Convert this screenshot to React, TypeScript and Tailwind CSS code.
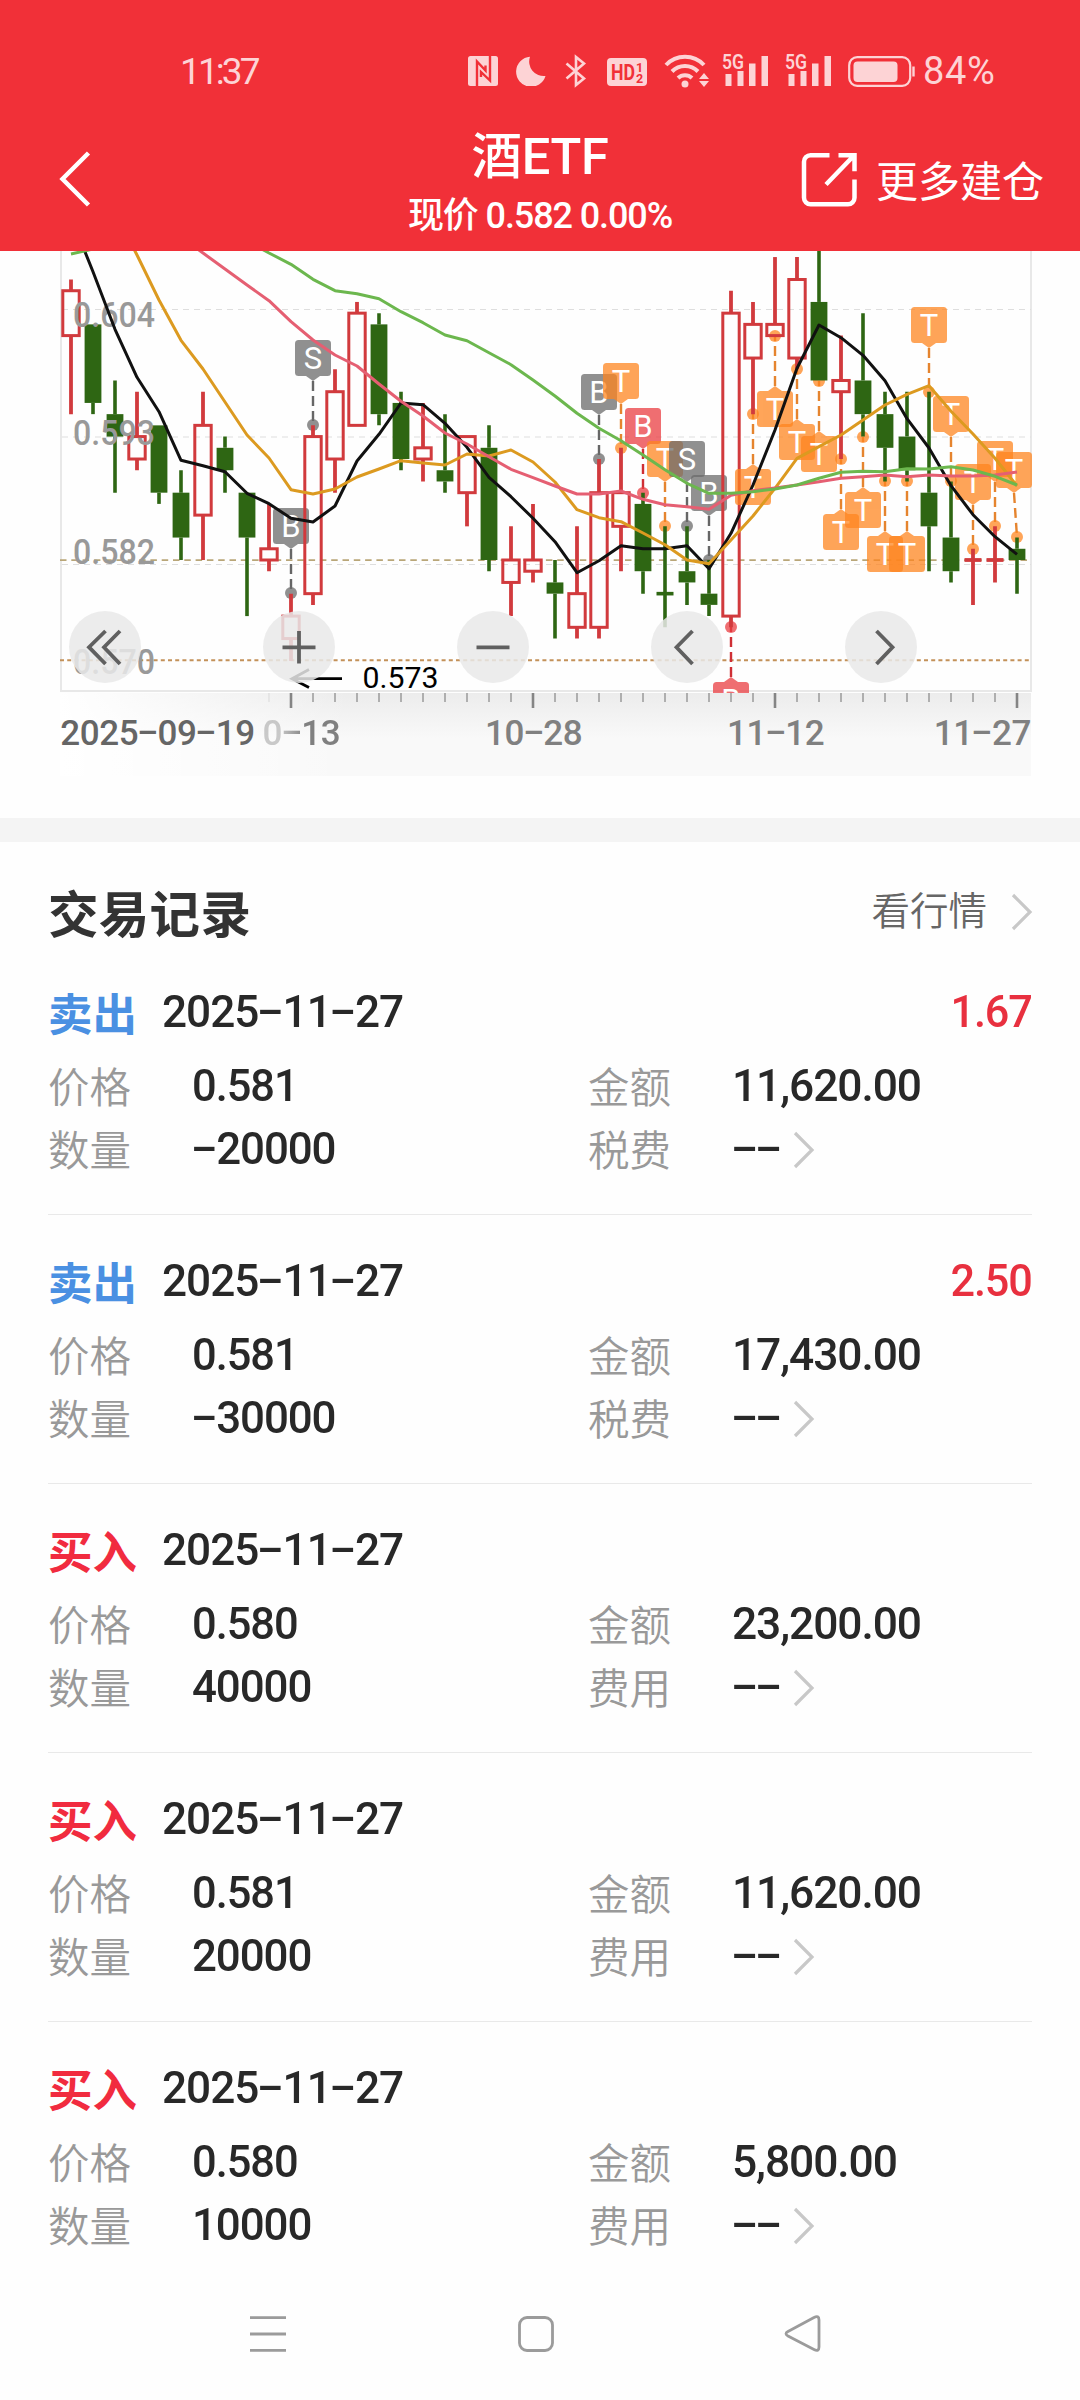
import type { ReactNode } from "react"
import clsx from "clsx"

type Candle = [open: number, close: number, high: number, low: number]

type Marker = {
    i: number,
    letter: "B" | "S" | "T",
    tone: "gray" | "red" | "orange",
    dot: number,
    below?: boolean,
    shift?: number,
}

type Trade = {
    side: "buy" | "sell",
    date: string,
    profit?: string,
    price: string,
    amount: string,
    quantity: string,
}

// prices in thousandths
const candles: Candle[] = [
    [602, 606, 607, 595], [603, 596, 603, 595], [595, 593, 598, 588], [591, 593, 597, 590],
    [594, 588, 594, 587], [588, 584, 590, 582], [586, 594, 597, 582], [592, 590, 593, 588],
    [588, 584, 588, 577], [582, 583, 587, 581], [575, 577, 579, 573], [579, 593, 594, 578],
    [591, 597, 599, 588], [594, 604, 605, 594], [603, 595, 604, 594], [596, 591, 597, 590],
    [591, 592, 596, 589], [590, 589, 595, 588], [588, 593, 593, 585], [592, 582, 594, 581],
    [580, 582, 585, 577], [581, 582, 587, 580], [580, 579, 582, 575], [576, 579, 585, 575],
    [576, 588, 591, 575], [585, 588, 592, 581], [587, 581, 588, 579], [579, 579, 585, 576],
    [581, 580, 585, 578], [579, 578, 582, 577], [577, 604, 606, 576], [600, 603, 605, 595],
    [602, 603, 609, 602], [600, 607, 609, 599], [605, 598, 612, 598], [597, 598, 602, 591],
    [598, 595, 604, 593], [595, 592, 597, 589], [593, 590, 597, 589], [588, 585, 597, 581],
    [584, 581, 589, 580], [582, 582, 583, 578], [582, 582, 585, 580], [583, 582, 584, 579],
]

const redDoji = [41, 42]

const ma5 = [217, 271.7, 329.3, 377.3, 411.7, 460.3, 465.7, 471.7, 493.3, 503.7, 518.3, 522, 506, 461, 434.3, 403, 404.7, 423.3, 447.3, 477.3, 496.7, 518.3, 541.7, 572.7, 560.7, 545.7, 548.7, 548.7, 545.7, 568.7, 533.3, 485, 430, 368.3, 325, 337.7, 355.3, 380.7, 418.7, 448, 485.7, 514.7, 536.7, 554.3]
const ma10 = [140, 175, 212, 255, 300, 340.3, 369, 402, 435, 458, 489.7, 494, 489, 477, 469, 460.7, 463, 465, 454, 456, 450, 462, 482, 509.7, 517.7, 521.7, 533, 544.7, 560, 563.7, 540, 516, 488.3, 458.3, 446.7, 435, 420, 405, 394.3, 385.7, 411.3, 434, 458.3, 486]
const ma20 = [150, 170, 190, 210, 225, 237, 253, 269, 285, 300.7, 321.7, 340, 355, 366, 384, 401.3, 416, 433, 444, 456.7, 469.3, 477.7, 486, 494, 494, 491, 499.3, 504.7, 506.7, 509.3, 495.3, 490.7, 488, 485, 481.7, 478.3, 476.7, 475, 476.7, 475, 476, 476, 475, 472]
const ma30 = [254, 249, 242, 236, 232, 230, 230, 233, 241, 253, 264.3, 279.3, 290.7, 293.7, 298.7, 311.7, 322.7, 335, 340.7, 352.7, 364.7, 380, 396, 413.3, 428.3, 440.7, 455, 469.7, 483.3, 493.3, 493.3, 491.7, 489, 485, 478.3, 472.3, 471.3, 471.7, 468.7, 469, 466.7, 470, 476.3, 485]

const markers: Marker[] = [
    { i: 10, letter: "B", tone: "gray", dot: 593 },
    { i: 11, letter: "S", tone: "gray", dot: 425 },
    { i: 24, letter: "B", tone: "gray", dot: 459 },
    { i: 25, letter: "T", tone: "orange", dot: 448 },
    { i: 26, letter: "B", tone: "red", dot: 493 },
    { i: 27, letter: "T", tone: "orange", dot: 526 },
    { i: 28, letter: "S", tone: "gray", dot: 526 },
    { i: 29, letter: "B", tone: "gray", dot: 560 },
    { i: 30, letter: "B", tone: "red", dot: 627, below: true },
    { i: 31, letter: "T", tone: "orange", dot: 414, below: true },
    { i: 32, letter: "T", tone: "orange", dot: 336, below: true },
    { i: 33, letter: "T", tone: "orange", dot: 369, below: true },
    { i: 34, letter: "T", tone: "orange", dot: 381, below: true },
    { i: 35, letter: "T", tone: "orange", dot: 459, below: true },
    { i: 36, letter: "T", tone: "orange", dot: 437, below: true },
    { i: 37, letter: "T", tone: "orange", dot: 481, below: true },
    { i: 38, letter: "T", tone: "orange", dot: 481, below: true },
    { i: 39, letter: "T", tone: "orange", dot: 392 },
    { i: 40, letter: "T", tone: "orange", dot: 481 },
    { i: 41, letter: "T", tone: "orange", dot: 549 },
    { i: 42, letter: "T", tone: "orange", dot: 526 },
    { i: 43, letter: "T", tone: "orange", dot: 537, shift: -3 },
]

const tones = {
    gray: { fill: "#6b6b6b", line: "#666666" },
    red: { fill: "#ea3d41", line: "#cf2f35" },
    orange: { fill: "#ff851f", line: "#e5842e" },
}

const trades: Trade[] = [
    { side: "sell", date: "2025-11-27", profit: "1.67", price: "0.581", amount: "11,620.00", quantity: "-20000" },
    { side: "sell", date: "2025-11-27", profit: "2.50", price: "0.581", amount: "17,430.00", quantity: "-30000" },
    { side: "buy", date: "2025-11-27", price: "0.580", amount: "23,200.00", quantity: "40000" },
    { side: "buy", date: "2025-11-27", price: "0.581", amount: "11,620.00", quantity: "20000" },
    { side: "buy", date: "2025-11-27", price: "0.580", amount: "5,800.00", quantity: "10000" },
]

const xAt = (i: number) => 71 + i * 22
const yAt = (price: number) => 560 + (582 - price) * 11.22
const toPoints = (ys: number[]) => ys.map((y, i) => `${xAt(i)},${y}`).join(" ")

// digits with a dash as wide as a digit
const Num = ({ children, className }: { children: string, className?: string }) => (
    <span className={clsx("inline-block whitespace-nowrap", className)}>
        {children.split("").map((c, i) => c === "-"
            ? <span key={i} className="inline-block w-[0.55em] text-center tracking-normal"><span className="inline-block -translate-y-[0.05em] scale-x-[1.8]">-</span></span>
            : c)}
    </span>
)

const StatusBar = () => (
    <div className="flex h-[112px] items-start pt-[53px] text-[#fdd3d5]">
        <span className="ml-[180px] w-[288px] text-[37px] leading-[37px] tracking-[-2.9px]">11:37</span>
        <svg className="mt-[3px] h-[30px] w-[30px]" viewBox="0 0 30 30">
            <rect width="30" height="30" rx="2.5" fill="currentColor" />
            <path d="M9 30V5.500L17.500 14.500V9.500M22 0v24.500L13 16V21" fill="none" stroke="#f13038" strokeWidth="2.400" />
        </svg>
        <svg className="ml-[18px] mt-[3px] h-[30px] w-[30px]" viewBox="0 0 30 30">
            <path d="M14 .8A15 15 0 1 0 29.500 20 14.500 14.500 0 0 1 14 .8z" fill="currentColor" />
        </svg>
        <svg className="ml-[18px] mt-[1px] h-[34px] w-[24px]" viewBox="0 0 24 34">
            <path d="M2.500 9.500L20 24.500 12 31V3l8 6.500L2.500 24.500" fill="none" stroke="currentColor" strokeWidth="2.600" />
        </svg>
        <svg className="ml-[19px] mt-[5px] h-[28px] w-[40px]" viewBox="0 0 40 28">
            <rect width="40" height="28" rx="4" fill="currentColor" />
            <text x="4" y="22" fontSize="22" fontWeight="700" textLength="24" lengthAdjust="spacingAndGlyphs" fill="#f13038">HD</text>
            <text x="29" y="13.500" fontSize="12.500" fontWeight="700" fill="#f13038">1</text>
            <text x="29" y="25" fontSize="12.500" fontWeight="700" fill="#f13038">2</text>
        </svg>
        <svg className="ml-[17px] h-[35px] w-[46px]" viewBox="0 0 46 35">
            <g fill="none" stroke="currentColor" strokeWidth="4">
                <path d="M2 12a26 26 0 0 1 38 0" />
                <path d="M8 18.500a18 18 0 0 1 26 0" />
                <path d="M14 25a10 10 0 0 1 14 0" />
            </g>
            <circle cx="21" cy="31" r="3.500" fill="currentColor" />
            <path d="M40 20l5 6H35zM40 34l5-6H35z" fill="currentColor" />
        </svg>
        <Signal className="ml-[12px]" />
        <Signal className="ml-[16px]" />
        <svg className="ml-[16px] mt-[3px] h-[31px] w-[68px]" viewBox="0 0 68 31">
            <rect x="1.200" y="1.200" width="61" height="28.600" rx="8" fill="none" stroke="currentColor" strokeWidth="2.200" />
            <rect x="5.500" y="5.500" width="44" height="20.500" rx="4" fill="currentColor" />
            <path d="M65.500 10.500v10" stroke="currentColor" strokeWidth="2.400" />
        </svg>
        <span className="ml-[7px] text-[38px] leading-[37px] tracking-[0.7px]">84%</span>
    </div>
)

const Signal = ({ className }: { className?: string }) => (
    <svg className={clsx("h-[34px] w-[47px] overflow-visible", className)} viewBox="0 0 47 34">
        <text x="0" y="16" fontSize="20.500" fontWeight="600" textLength="22" lengthAdjust="spacingAndGlyphs" fill="currentColor">5G</text>
        <path d="M3.500 21h6v12h-6zM15.500 18h6v15h-6zM27 10.500h6.500V33H27zM39.500 3h6.500v30h-6.500z" fill="currentColor" />
    </svg>
)

const Header = () => (
    <header className="h-[251px] shrink-0 bg-[#f13038] font-[Roboto,'Noto_Sans_CJK_SC',sans-serif] text-white">
        <StatusBar />
        <div className="grid h-[139px] grid-cols-[409px_262px_409px]">
            <svg className="ml-[58px] mt-[38px] h-[58px] w-[36px]" viewBox="0 0 36 58" fill="none" stroke="currentColor" strokeWidth="4.500">
                <path d="M30.500 3L4.500 29l26 26" />
            </svg>
            <div className="flex flex-col items-center">
                <h1 className="mt-[16px] whitespace-nowrap text-[50.500px] font-medium leading-[58px] tracking-[-0.3px]">酒ETF</h1>
                <p className="mt-[2px] whitespace-nowrap text-[36px] font-medium leading-[56px] tracking-[-1.1px]">现价 0.582 0.00%</p>
            </div>
            <div className="flex pl-[129px] pt-[38px]">
                <svg className="mt-[1px] h-[57px] w-[57px]" viewBox="0 0 57 57" fill="none" stroke="currentColor" strokeWidth="4.500">
                    <path d="M29.500 4.300H10.500a6.500 6.500 0 0 0-6.500 6.500v36a6.500 6.500 0 0 0 6.500 6.500h37.500a6.500 6.500 0 0 0 6.500-6.500V28.500M38.500 4.300h16v16M54 4.500L26 33.500" />
                </svg>
                <span className="ml-[19px] whitespace-nowrap text-[42px] leading-[65px]">更多建仓</span>
            </div>
        </div>
    </header>
)

const CandleShape = ({ i, candle }: { i: number, candle: Candle }) => {
    const [ open, close, high, low ] = candle
    const x = xAt(i)
    const top = yAt(Math.max(open, close))
    const bottom = yAt(Math.min(open, close))
    const red = close > open || redDoji.includes(i)
    const color = red ? "#d13a3d" : "#2e6613"

    return (
        <g stroke={color} strokeWidth={red ? 3.8 : 3.6} fill="none">
            <path d={`M${x} ${yAt(high)}V${top}M${x} ${bottom}V${yAt(low)}`} />
            {top === bottom && <path d={`M${x - 8.5} ${top}H${x + 8.5}`} />}
            {top !== bottom && red && <rect x={x - 8.2} y={top} width="16.400" height={bottom - top} strokeWidth="3" />}
            {top !== bottom && !red && <rect x={x - 8.4} y={top} width="16.800" height={bottom - top} fill={color} stroke="none" />}
        </g>
    )
}

const MarkerShape = ({ marker }: { marker: Marker }) => {
    const { i, letter, tone, dot, below, shift = 0 } = marker
    const x = xAt(i)
    const cx = x + shift
    const boxY = below ? dot + 55 : dot - 85
    const tip = below ? boxY - 5 : boxY + 41
    const base = below ? boxY : boxY + 36

    return (
        <g>
            <path d={`M${cx} ${tip}L${x} ${dot}`} stroke={tones[tone].line} strokeWidth="2.400" strokeDasharray="10 5" />
            <g fill={tones[tone].fill} opacity="0.74">
                <circle cx={x} cy={dot} r="6" />
                <rect x={cx - 18} y={boxY} width="36" height="36" rx="3.500" />
                <path d={`M${cx - 7} ${base}L${cx} ${tip}L${cx + 7} ${base}z`} />
            </g>
            <text x={cx} y={boxY + 29} textAnchor="middle" fontSize="31" fill="#fff">{letter}</text>
        </g>
    )
}

const ChartButton = ({ d }: { d: string }) => (
    <button className="size-[72px] rounded-full bg-[#e9e9e9]/85">
        <svg className="size-[72px]" viewBox="0 0 72 72" fill="none" stroke="#606060" strokeWidth="3.800">
            <path d={d} />
        </svg>
    </button>
)

const priceLabels = [
    { text: "0.604", y: 327 },
    { text: "0.593", y: 444.5 },
    { text: "0.582", y: 563.5 },
    { text: "0.570", y: 674 },
]

const Chart = () => (
    <section className="relative h-[567px] shrink-0 pl-[60px] font-[Roboto,sans-serif]">
        <svg className="block h-[442px] w-[972px]" viewBox="60 251 972 442">
            <path d="M61 251V691H1031V251" fill="none" stroke="#e8e8e8" strokeWidth="2" />
            <path d="M62 309.500H1031M62 437H1031M62 564.500H1031" stroke="#dedede" strokeWidth="1.200" strokeDasharray="6 5" />
            <path d="M60 560.200H1031" stroke="#b9a678" strokeWidth="1.800" strokeDasharray="6.500 4.800" />
            <path d="M60 660.200H1031" stroke="#c39159" strokeWidth="2" strokeDasharray="4 3.200" />
            {candles.map((candle, i) => {
                const marker = markers.find((m) => m.i === i)
                return (
                    <g key={i}>
                        {marker && <MarkerShape marker={marker} />}
                        <CandleShape i={i} candle={candle} />
                    </g>
                )
            })}
            {priceLabels.map(({ text, y }) => (
                <text key={text} x="73" y={y} fontSize="35" fontWeight="500" fill="#999" textLength="82" lengthAdjust="spacingAndGlyphs">{text}</text>
            ))}
            <g fill="none" strokeWidth="3" strokeLinejoin="round">
                <polyline points={toPoints(ma5)} stroke="#111" />
                <polyline points={toPoints(ma10)} stroke="#dc9a20" />
                <polyline points={toPoints(ma20)} stroke="#e55f72" />
                <polyline points={toPoints(ma30)} stroke="#6cb74e" />
            </g>
            <path d="M342 678.700H292M309 669.500L292 678.700L309 687.500" fill="none" stroke="#000" strokeWidth="2.800" />
            <text x="362.500" y="688" fontSize="29" textLength="76" lengthAdjust="spacingAndGlyphs">0.573</text>
        </svg>
        <div className="h-[83px] w-[971px] bg-[linear-gradient(to_right,#fff_0%,#fff0_30%),linear-gradient(to_bottom,#ececec_0%,#f9f9f9_55%)]">
            <svg className="block h-[15px] w-[972px]" viewBox="60 692 972 15">
                {candles.map((_, i) => i > 8 && (
                    <path key={i} d={i % 11 === 10 ? `M${xAt(i)} 692v15` : `M${xAt(i)} 692v9`} stroke={i === 9 ? "#ddd" : "#858585"} strokeWidth={i % 11 === 10 ? 2.6 : 1.2} />
                ))}
            </svg>
            <div className="flex pt-[5px] text-center text-[35px] font-medium leading-[42px] tracking-[-0.4px] text-[#808080]">
                <span className="relative z-10 w-[195px] text-[#666]"><Num>2025-09-19</Num></span>
                <span className="-ml-[12px] w-[96px] [mask-image:linear-gradient(to_right,transparent_18%,#0006_22%,#0006_38%,#000_65%)]"><Num>10-13</Num></span>
                <span className="ml-[146px] w-[96px]"><Num>10-28</Num></span>
                <span className="ml-[146px] w-[96px]"><Num>11-12</Num></span>
                <span className="ml-auto"><Num>11-27</Num></span>
            </div>
        </div>
        <div className="absolute left-[69px] top-[360px] flex gap-[122px]">
            <ChartButton d="M36.500 20L20 36.200L36.500 53M51 20L35 36.200L51 53" />
            <ChartButton d="M19.500 36.300H52.500M36 20V52.500" />
            <ChartButton d="M19.500 36.300H52.500" />
            <ChartButton d="M41.500 20L25.500 36.200L41.500 53" />
            <ChartButton d="M31.500 20L47.500 36.200L31.500 53" />
        </div>
    </section>
)

const Arrow = ({ className }: { className?: string }) => (
    <svg className={clsx("h-[38px] w-[22px]", className)} viewBox="0 0 22 38" fill="none" stroke="#c8c8c8" strokeWidth="3.200">
        <path d="M2 2L19 19L2 36" />
    </svg>
)

const Field = ({ label, children }: { label: string, children: ReactNode }) => (
    <div className="flex h-[63px] items-center">
        <span className="w-[144px] pt-[8px] text-[41.500px] font-[350] text-[#999]">{label}</span>
        <span className="flex items-center text-[45px] font-medium tracking-[-1.1px] text-[#282828]">{children}</span>
    </div>
)

const TradeItem = ({ trade, last }: { trade: Trade, last: boolean }) => {
    const sell = trade.side === "sell"

    return (
        <li className={clsx("h-[269px] pt-[26px]", !last && "border-b border-[#e9e9e9]")}>
            <div className="flex h-[80px] items-center">
                <span className={clsx("w-[114px] pt-[8px] text-[44.500px] font-bold", sell ? "text-[#4a90e2]" : "text-[#f12b3f]")}>{sell ? "卖出" : "买入"}</span>
                <span className="text-[45px] font-medium tracking-[-1px] text-[#282828]"><Num className="origin-left scale-x-[0.98]">{trade.date}</Num></span>
                <span className="ml-auto origin-right scale-x-[0.96] text-[45px] font-medium tracking-[-1.1px] text-[#e8303f]">{trade.profit}</span>
            </div>
            <div className="mt-[2px] grid grid-cols-[540px_1fr]">
                <Field label="价格"><Num className="origin-left scale-x-[0.965]">{trade.price}</Num></Field>
                <Field label="金额"><Num className="origin-left scale-x-[0.985]">{trade.amount}</Num></Field>
                <Field label="数量"><Num className="origin-left scale-x-[0.975]">{trade.quantity}</Num></Field>
                <Field label={sell ? "税费" : "费用"}>
                    <Num>--</Num>
                    <Arrow className="ml-[11px] mt-[2px]" />
                </Field>
            </div>
        </li>
    )
}

const NavBar = () => (
    <nav className="flex h-[108px] shrink-0 justify-between pl-[248px] pr-[256px] pt-[22px]">
        {[
            <path key="menu" d="M2 3.700H38M2 20H38M2 36.300H38" />,
            <rect key="home" x="3.500" y="3.500" width="33" height="33" rx="7.500" />,
            <path key="back" d="M4 17.500L30 3.500Q35 1 35 6V33Q35 38 30 35.500L4 22Q0 19.700 4 17.500z" />,
        ].map((shape, i) => (
            <svg key={i} className="size-[40px]" viewBox="0 0 40 40" fill="none" stroke="#9b9b9b" strokeWidth="2.800">{shape}</svg>
        ))}
    </nav>
)

const App = () => {
    return (
        <div className="flex h-[2400px] w-[1080px] flex-col overflow-hidden bg-[#fefefe]">
            <Header />
            <Chart />
            <div className="h-[24px] shrink-0 bg-[#f4f4f4]" />
            <main className="flex-1 px-[48px] font-[Roboto,'Noto_Sans_CJK_SC',sans-serif]">
                <div className="flex h-[104px] items-center justify-between pt-[44px]">
                    <h2 className="text-[50.500px] font-bold leading-[60px] tracking-[0.3px] text-[#333]">交易记录</h2>
                    <a className="-mt-[8px] flex items-center text-[38.500px] font-[350] leading-[50px] text-[#666]">看行情<Arrow className="ml-[24px] mr-[-1px]" /></a>
                </div>
                <ul>
                    {trades.map((trade, i) => <TradeItem key={i} trade={trade} last={i === trades.length - 1} />)}
                </ul>
            </main>
            <NavBar />
        </div>
    )
}

export default App
